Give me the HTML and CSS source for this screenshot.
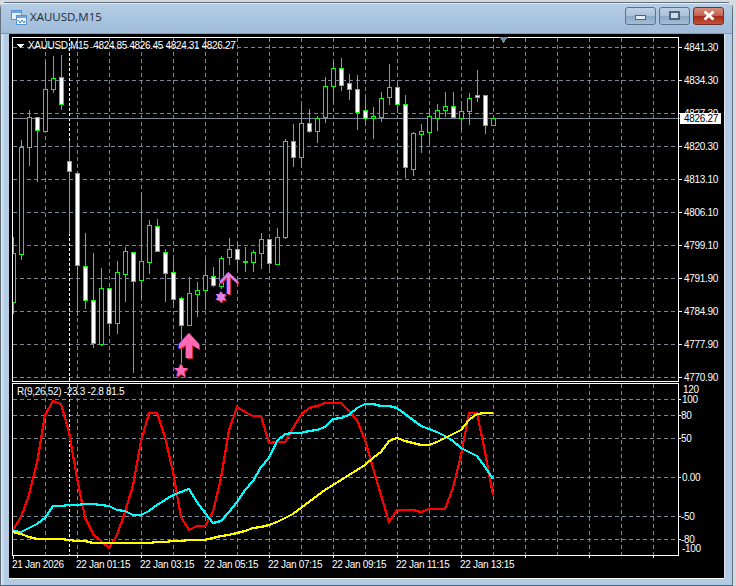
FILE: index.html
```html
<html>
<head>
<link rel="stylesheet" href="styles.css">
</head>
<body>
<div class="window">
    <div class="titlebar">
        <svg class="app-icon" width="16" height="15" viewBox="0 0 16 15">
            <rect x="0.5" y="0.5" width="10" height="9" fill="#e6f0fa" stroke="#5a93d0"/>
            <rect x="1" y="1" width="9" height="2" fill="#6ea6e0"/>
            <rect x="5.5" y="5.5" width="10" height="9" fill="#f2f7fc" stroke="#5a93d0"/>
            <rect x="6" y="6" width="9" height="2" fill="#6ea6e0"/>
            <path d="M7 10l2 3 2-3 2 3 1-2" fill="none" stroke="#4a7fc0"/>
        </svg>
        <span class="title">XAUUSD,M15</span>
        <div class="buttons">
            <div class="btn btn-min"><span class="glyph-min"></span></div>
            <div class="btn btn-max"><span class="glyph-max"></span></div>
            <div class="btn btn-close">
                <svg width="14" height="11" viewBox="0 0 14 11"><path d="M2.5 1.5l9 8M11.5 1.5l-9 8" stroke="#fff" stroke-width="3"/></svg>
            </div>
        </div>
    </div>
    <div class="client">
        <svg id="chart" class="chart" width="715" height="542" viewBox="9 34 715 542"></svg>
    </div>
</div>
<script src="chart.js"></script>
</body>
</html>
```

FILE: styles.css
```css
* {
    box-sizing: border-box;
}

body {
    margin: 0;
    height: 586px;
    overflow: hidden;
    background: #d4dae0;
}

.window {
    width: 733px;
    height: 584px;
    margin-top: 2px;
    padding: 0 8px 7px 8px;
    display: flex;
    flex-direction: column;
    background: linear-gradient(90deg, #dfe9f2 0, #b3cce3 4px, #b3cce3 100%);
    border: 1px solid #5f6f7c;
    border-bottom-color: #2f6f86;
    border-radius: 6px 6px 0 0;
}

.titlebar {
    height: 31px;
    margin: 0 -8px;
    padding: 0 1px 0 2px;
    display: flex;
    align-items: center;
    background: linear-gradient(180deg, #b6cde4 0, #a6c2dd 60%, #a0bcd9 100%);
    border-top: 1px solid #e4edf5;
    border-bottom: 1px solid #8a9aaa;
}

.app-icon {
    margin-left: 8px;
    margin-top: -3px;
}

.title {
    margin-left: 3px;
    margin-top: -4px;
    font-family: "Open Sans", sans-serif;
    font-size: 11.5px;
    color: #1c2a38;
}

.buttons {
    margin-left: auto;
    margin-right: 7px;
    margin-top: -6px;
    display: flex;
    gap: 3px;
}

.btn {
    height: 18px;
    width: 31px;
    display: flex;
    align-items: center;
    justify-content: center;
    border: 1px solid #5c7288;
    border-radius: 3px;
    background: linear-gradient(180deg, #bcd0e3 0, #a9c2d9 48%, #8ba9c6 52%, #a3bed6 100%);
}

.btn-close {
    border-color: #6e2f2a;
    background: linear-gradient(180deg, #d68f80 0, #c2604f 48%, #a62c1a 52%, #c4503a 100%);
}

.glyph-min {
    width: 11px;
    height: 5px;
    margin-top: 4px;
    background: #e6eef5;
    border: 1px solid #4f6277;
}

.glyph-max {
    width: 11px;
    height: 9px;
    background: #cfdde9;
    border: 2px solid #4f6277;
}

.client {
    flex: 1;
    background: #000;
    box-shadow: 0 1px 0 #fff, 1px 0 0 #dce9f4;
}

.chart {
    display: block;
    shape-rendering: crispEdges;
}

.grid {
    stroke: #778899;
    stroke-dasharray: 4 3;
    fill: none;
}

.separator {
    stroke: #fff;
    stroke-dasharray: 3 2;
    fill: none;
}

.frame {
    stroke: #fff;
    fill: none;
}

.tick {
    stroke: #fff;
}

.price-line {
    stroke: #778899;
}

.wick {
    stroke: #0f0;
}

.body-up {
    stroke: #0f0;
    fill: #000;
}

.body-down {
    stroke: #0f0;
    fill: #fff;
}

.trace {
    fill: none;
    stroke-width: 2.2;
}

.trace-red {
    stroke: #f00;
}

.trace-cyan {
    stroke: #0ff;
}

.trace-yellow {
    stroke: #ff0;
}

.chart text {
    font-family: "Liberation Sans", sans-serif;
    font-size: 10px;
    letter-spacing: -0.3px;
    white-space: pre;
    fill: #fff;
    dominant-baseline: central;
}

.chart .header-text {
    letter-spacing: -0.35px;
}

.chart .ask-text {
    fill: #000;
}

.ask-box {
    fill: #fff;
}

.shift-mark {
    fill: #778899;
}

.marker {
    shape-rendering: auto;
}

.marker-big {
    fill: #ff69b4;
}

.marker-small {
    fill: #e080e8;
}
```

FILE: chart.js
```js
const NS = "http://www.w3.org/2000/svg";
const svg = document.getElementById("chart");

function add(tag, attrs, parent){
    const el = document.createElementNS(NS, tag);
    for(const k in attrs){
        el.setAttribute(k, attrs[k]);
    }
    (parent || svg).appendChild(el);
    return el;
}

function label(x, y, str, cls){
    const t = add("text", {x: x, y: y, class: cls || ""});
    t.textContent = str;
}

const LEFT = 12, RIGHT = 678;

// x starts at 13 and goes up by 8; high, low, body top, body bottom, 1 = white body
const candles = [
    [237,313,253,302,0],[140,259,147,254,0],[110,165,117,147,0],[117,181,117,130,1],
    [61,131,89,131,0],[56,92,78,89,0],[55,109,77,104,1],[141,233,161,171,1],
    [173,315,173,265,1],[233,308,266,300,1],[253,347,300,343,1],[268,345,288,344,0],
    [288,333,288,323,1],[261,333,272,323,0],[247,301,251,274,0],[252,372,252,281,1],
    [193,298,261,280,0],[220,273,225,262,0],[219,251,226,251,1],[249,301,252,273,1],
    [259,303,272,299,1],[297,362,298,325,1],[277,325,293,325,0],[282,316,290,294,0],
    [259,309,275,290,0],[267,286,276,285,1],[256,288,258,286,0],[238,264,249,257,0],
    [242,268,249,259,1],[247,271,261,262,1],[250,271,252,262,0],[233,268,239,253,0],
    [239,268,239,263,1],[228,264,237,264,0],[139,238,141,237,0],[124,166,141,157,1],
    [104,166,123,157,0],[109,132,123,131,1],[116,142,118,131,0],[77,122,86,117,0],
    [62,102,68,86,0],[58,90,68,85,1],[74,99,83,89,1],[75,129,89,112,1],
    [97,123,110,118,1],[107,138,116,118,0],[92,121,98,117,0],[64,104,87,97,0],
    [83,112,87,104,1],[95,177,104,167,1],[132,175,133,169,0],[124,152,131,134,0],
    [109,143,116,132,0],[104,130,110,118,0],[92,116,106,110,0],[92,118,106,117,1],
    [102,130,111,118,0],[93,124,98,111,0],[70,101,95,97,1],[95,133,95,125,1],
    [118,125,118,125,0]
];

const red = [530,517,495,463,415,401,404,432,478,517,534,541,548,535,512,485,441,413,413,437,
    472,517,530,526,526,512,478,430,407,412,416,416,443,442,442,428,415,408,406,403,
    403,403,411,420,440,468,495,522,510,510,510,512,509,509,509,488,455,413,413,452,495];
const cyan = [531,532,528,524,518,506,506,505,505,504,504,505,506,510,511,515,515,511,505,500,
    495,492,489,502,513,523,521,512,502,490,481,467,458,441,434,433,433,431,430,427,
    419,418,415,408,404,404,406,406,408,414,420,426,429,432,436,441,448,452,456,467,479];
const yellow = [532,534,537,539,539,539,539,540,541,541,543,543,543,543,543,543,543,543,542,542,
    541,541,540,540,540,538,536,535,533,531,528,527,525,522,518,514,508,502,496,490,
    485,480,475,470,465,458,452,441,438,441,443,445,445,442,438,434,430,420,414,413,413];

const clip = add("clipPath", {id: "plot"});
add("rect", {x: LEFT, y: 37, width: RIGHT - LEFT, height: 519}, clip);

const plot = add("g", {"clip-path": "url(#plot)"});

const priceRows = [[47,"4841.30"],[80,"4834.30"],[113,"4827.30"],[146,"4820.30"],[179,"4813.10"],
    [212,"4806.10"],[245,"4799.10"],[278,"4791.90"],[311,"4784.90"],[344,"4777.90"],[377,"4770.90"]];
const indRows = [[399,"100",682],[415,"80",681],[438,"50",681],[477,"0.00",682],[516,"-50",681],[539,"-80",681]];

// grid
for(let x = 45; x < RIGHT; x += 32){
    add("path", {class: "grid", d: `M${x}.5 38V381`}, plot);
    add("path", {class: "grid", d: `M${x}.5 384V555`}, plot);
}
priceRows.forEach(r => add("path", {class: "grid", d: `M13 ${r[0]}.5H678`}, plot));
indRows.forEach(r => add("path", {class: "grid", d: `M13 ${r[0]}.5H678`}, plot));
add("path", {class: "separator", d: "M69.5 38V381M69.5 384V555"}, plot);

add("path", {class: "price-line", d: "M13 118.5H678"}, plot);

// candles
candles.forEach((c, i) => {
    const x = 13 + i * 8;
    add("path", {class: "wick", d: `M${x}.5 ${c[0]}V${c[1] + 1}`}, plot);
    add("rect", {
        class: c[4] ? "body-down" : "body-up",
        x: x - 1.5,
        y: c[2] + 0.5,
        width: 4,
        height: Math.max(c[3] - c[2], 1)
    }, plot);
});

// indicator lines
function trace(values, cls){
    const pts = values.map((y, i) => `${13 + i * 8},${y}`).join(" ");
    add("polyline", {class: "trace " + cls, points: pts}, plot);
}
trace(red, "trace-red");
trace(cyan, "trace-cyan");
trace(yellow, "trace-yellow");

// frames
add("rect", {class: "frame", x: 12.5, y: 37.5, width: 666, height: 344});
add("rect", {class: "frame", x: 12.5, y: 383.5, width: 666, height: 172});

// markers, same polygon drawn twice for the coloured edge
function marker(points, cls){
    add("polygon", {class: "marker", points: points, fill: "#2a2ad0", transform: "translate(-1 0)"});
    add("polygon", {class: "marker", points: points, fill: "#d02a2a", transform: "translate(1 1)"});
    add("polygon", {class: "marker " + cls, points: points});
}
marker("189,333 199,344 199,349 192,345 192,358 186,358 186,345 179,349 179,344", "marker-big");
marker("228.5,272 238,281 238,284 230,277 230,294 227,294 227,277 220,284 220,281", "marker-small");
marker("181,363 183,368 188,368 184,371.5 185.5,377 181,374 176.5,377 178,371.5 174,368 179,368", "marker-big");
marker("221,291 222.5,294 226,294 224,297 226,300 222.5,300 221,303 219.5,300 216,300 218,297 216,294 219.5,294", "marker-small");

// price axis, the 4827.30 row sits half under the bid box
priceRows.forEach(r => {
    add("path", {class: "tick", d: `M679 ${r[0]}.5H682`});
    label(684, r[0], r[1]);
});
add("path", {class: "shift-mark", d: "M499 37H508L503.5 43Z"});
add("path", {class: "price-line", d: "M679 118.5H681"});
add("rect", {class: "ask-box", x: 680, y: 113, width: 41, height: 11});
label(684, 118.5, "4826.27", "ask-text");

// indicator axis
label(683, 389, "120");
label(682, 548.5, "-100");
indRows.forEach(r => {
    add("path", {class: "tick", d: `M679 ${r[0]}.5H681`});
    label(r[2], r[0], r[1]);
});

// time axis
const times = ["21 Jan 2026","22 Jan 01:15","22 Jan 03:15","22 Jan 05:15","22 Jan 07:15",
    "22 Jan 09:15","22 Jan 11:15","22 Jan 13:15"];
times.forEach((t, i) => {
    label(12 + i * 64, 564, t);
});
add("path", {class: "tick", d: "M13.5 556V559"});
for(let x = 77; x < RIGHT; x += 64){
    add("path", {class: "tick", d: `M${x}.5 556V558`});
}

// header lines
add("path", {fill: "#fff", d: "M16 44H24L20 48Z"});
label(28, 45, "XAUUSD,M15  4824.85 4826.45 4824.31 4826.27", "header-text");
label(17, 391, "R(9,26,52) -23.3 -2.8 81.5");
```
